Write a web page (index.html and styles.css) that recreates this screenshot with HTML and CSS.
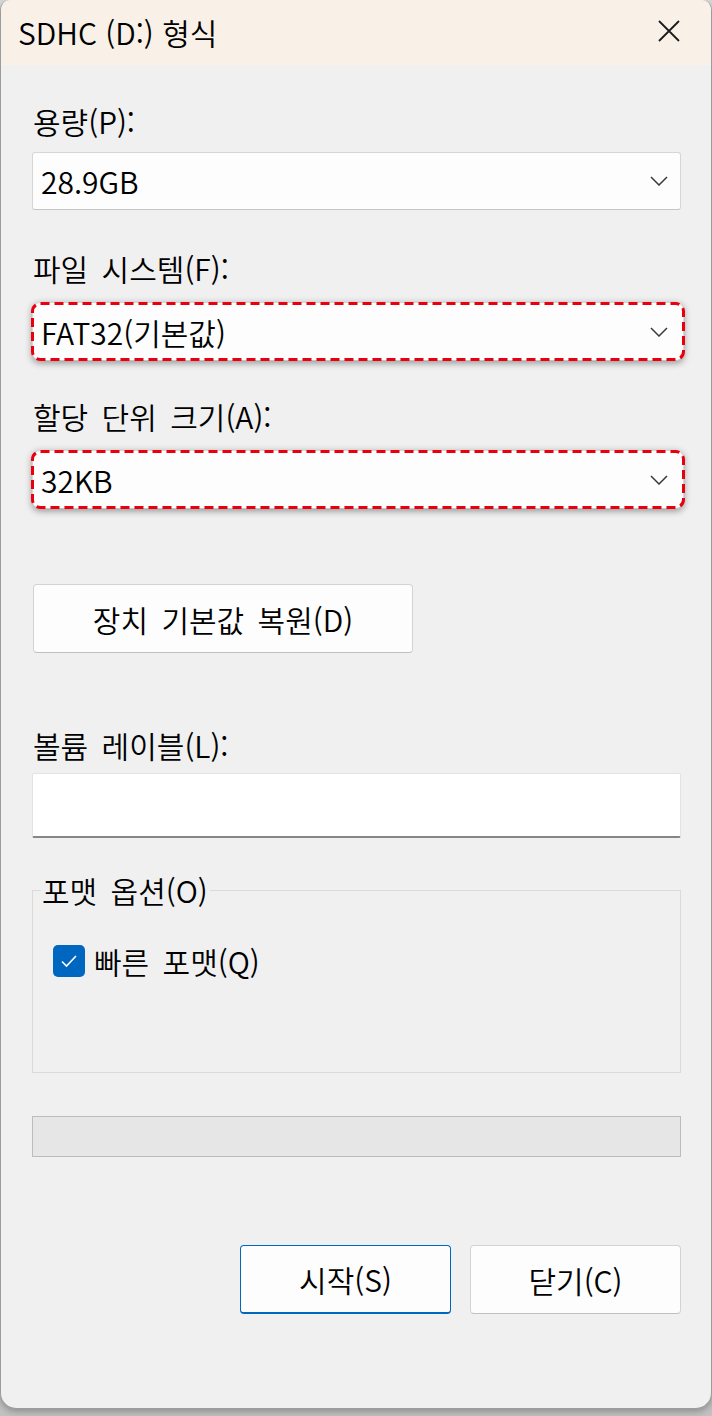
FILE: index.html
```html
<!DOCTYPE html>
<html lang="ko">
<head>
<meta charset="utf-8">
<title>SDHC (D:) 형식</title>
<link rel="stylesheet" href="styles.css">
</head>
<body>
<div class="window">
  <div class="titlebar">
    <span class="title">SDHC (D:) 형식</span>
    <svg class="close" width="24" height="24" viewBox="0 0 24 24"><path d="M2 2 L22 22 M22 2 L2 22" stroke="#1b1b1b" stroke-width="1.8" fill="none"/></svg>
  </div>
  <div class="content">
    <div class="label l1">용량(P):</div>
    <div class="combo"><span>28.9GB</span><svg class="chev" width="18" height="10" viewBox="0 0 18 10"><path d="M1 1 L9 9 L17 1" stroke="#3a3a3a" stroke-width="1.5" fill="none"/></svg></div>

    <div class="label l2">파일 시스템(F):</div>
    <div class="combo marked"><span>FAT32(기본값)</span><svg class="chev" width="18" height="10" viewBox="0 0 18 10"><path d="M1 1 L9 9 L17 1" stroke="#3a3a3a" stroke-width="1.5" fill="none"/></svg><svg class="dash"><rect x="1.5" y="1.5" rx="8" ry="8"/></svg></div>

    <div class="label l3">할당 단위 크기(A):</div>
    <div class="combo marked"><span>32KB</span><svg class="chev" width="18" height="10" viewBox="0 0 18 10"><path d="M1 1 L9 9 L17 1" stroke="#3a3a3a" stroke-width="1.5" fill="none"/></svg><svg class="dash"><rect x="1.5" y="1.5" rx="8" ry="8"/></svg></div>

    <div class="btn restore">장치 기본값 복원(D)</div>

    <div class="label l4">볼륨 레이블(L):</div>
    <div class="textbox"></div>

    <fieldset class="group">
      <legend>포맷 옵션(O)</legend>
      <div class="check-row">
        <span class="checkbox"><svg width="18" height="14" viewBox="0 0 18 14"><path d="M2 7.5 L6.5 12 L16 2" stroke="#fff" stroke-width="1.6" fill="none"/></svg></span>
        <span>빠른 포맷(Q)</span>
      </div>
    </fieldset>

    <div class="progress"></div>

    <div class="actions">
      <div class="btn primary">시작(S)</div>
      <div class="btn">닫기(C)</div>
    </div>
  </div>
</div>
</body>
</html>
```
FILE: styles.css
```css
* { box-sizing: border-box; }
html, body { margin: 0; padding: 0; }
body {
  width: 712px;
  height: 1416px;
  background: linear-gradient(#d6d6d6, #c2c2c2);
  font-family: "Noto Sans CJK KR", "Noto Sans", sans-serif;
  font-weight: 350;
  color: #000;
  overflow: hidden;
}
.window {
  width: 712px;
  height: 1409px;
  background: #f0f0f0;
  border: 1px solid #9c9c9c;
  border-top: none;
  border-radius: 10px 10px 16px 16px;
  overflow: hidden;
  box-shadow: 0 3px 6px rgba(0,0,0,0.25);
}
.titlebar {
  height: 65px;
  background: #f9f1e7;
  display: flex;
  align-items: center;
  justify-content: space-between;
  padding: 0 30px 0 17px;
}
.title {
  font-size: 30px;
  line-height: 36px;
  padding-bottom: 2px;
}
.close { display: block; margin-top: -4px; }
.content {
  padding: 0 30px 0 31px;
  display: flex;
  flex-direction: column;
  word-spacing: 5px;
}
.label {
  font-size: 30px;
  line-height: 36px;
  padding-left: 1px;
}
.l1 { margin-top: 38px; }
.l2 { margin-top: 40px; }
.l3 { margin-top: 37px; }
.l4 { margin-top: 74px; }
.combo {
  position: relative;
  height: 58px;
  margin-top: 13px;
  background: #fdfdfd;
  border: 1px solid #d6d6d6;
  border-bottom-color: #c6c6c6;
  border-radius: 3px;
  display: flex;
  align-items: center;
  justify-content: space-between;
  padding: 0 12px 0 8px;
  font-size: 30px;
}
.l2 + .combo, .l3 + .combo { margin-top: 16px; }
.combo span { line-height: 36px; }
.combo.marked {
  height: 59px;
  border-radius: 8px;
  box-shadow: 0 2px 7px rgba(0,0,0,0.4);
  margin-right: -3px;
  padding-right: 15px;
}
.dash {
  position: absolute;
  left: -2px;
  top: -1px;
  width: calc(100% + 4px);
  height: calc(100% + 2px);
  overflow: visible;
  pointer-events: none;
}
.dash rect {
  width: calc(100% - 3px);
  height: calc(100% - 3px);
  fill: none;
  stroke: #e8000e;
  stroke-width: 3;
  stroke-dasharray: 9 5;
}
.chev { display: block; }
.btn {
  display: flex;
  align-items: center;
  justify-content: center;
  height: 69px;
  background: #fdfdfd;
  border: 1px solid #d3d3d3;
  border-bottom-color: #c0c0c0;
  border-radius: 4px;
  font-size: 30px;
  line-height: 36px;
}
.restore {
  width: 380px;
  margin-top: 75px;
  margin-left: 1px;
}
.textbox {
  height: 65px;
  margin-top: 10px;
  background: #fff;
  border: 1px solid #e3e3e3;
  border-bottom: 2px solid #868686;
  border-radius: 2px;
}
.group {
  margin: 34px 0 0 0;
  padding: 0 0 93px 8px;
  border: 1px solid #dadada;
  min-width: 0;
}
.group legend {
  padding: 0 2px 0 1px;
  font-size: 30px;
  line-height: 36px;
}
.check-row {
  display: flex;
  align-items: center;
  margin-top: 35px;
  margin-left: 12px;
  font-size: 30px;
  line-height: 36px;
  gap: 9px;
}
.checkbox {
  width: 32px;
  height: 32px;
  border-radius: 5px;
  background: #0067c0;
  display: flex;
  align-items: center;
  justify-content: center;
}
.checkbox svg { display: block; }
.progress {
  height: 41px;
  margin-top: 43px;
  background: #e6e6e6;
  border: 1px solid #bcbcbc;
}
.actions {
  display: flex;
  justify-content: flex-end;
  gap: 19px;
  margin-top: 88px;
}
.actions .btn { width: 211px; }
.actions .btn.primary {
  border: 1px solid #0067c0;
  border-bottom-width: 2px;
}
```
